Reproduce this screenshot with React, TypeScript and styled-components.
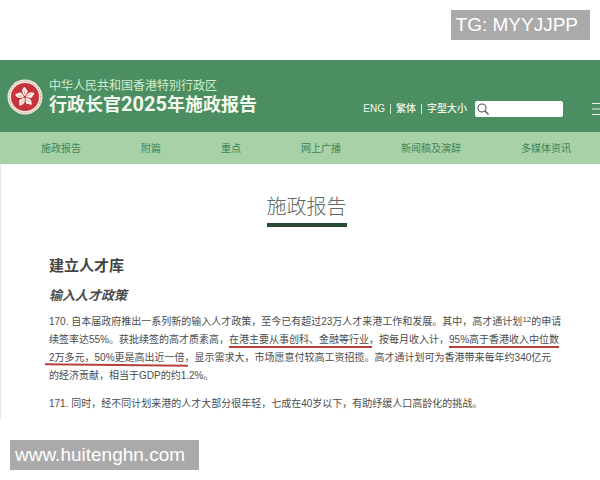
import React from "react";
import styled, { createGlobalStyle } from "styled-components";

const GlobalStyle = createGlobalStyle`
  * { box-sizing: border-box; }
  body {
    margin: 0;
    background: #fff;
    color: #4c4c4c;
    font-family: "Liberation Sans", "Noto Sans CJK SC", sans-serif;
    font-size: 10px;
    overflow-x: hidden;
  }
  h1, h2, h3, p { margin: 0; padding: 0; }
`;

const Page = styled.div`
  position: relative;
  min-height: 100vh;
  padding-top: 60px;
`;

const Header = styled.header`
  display: flex;
  align-items: center;
  height: 72px;
  padding-left: 7px;
  background: #4a8e61;
  color: #f3faee;
`;

const Brand = styled.a`
  display: flex;
  align-items: center;
  gap: 6px;
  padding-top: 1px;
  color: inherit;
  text-decoration: none;
`;

const Emblem = styled.svg`
  width: 36px;
  height: 36px;
  flex: none;
`;

const BrandText = styled.div`
  display: flex;
  flex-direction: column;
  white-space: nowrap;
`;

const Region = styled.span`
  font-size: 12px;
  line-height: 16px;
  color: #d3ecd0;
`;

const SiteTitle = styled.strong`
  font-family: Roboto, "Noto Sans CJK SC", sans-serif;
  font-size: 18px;
  line-height: 22px;
  font-weight: 700;
`;

const Year = styled.span`
  font-size: 20px;
  line-height: 20px;
`;

const Tools = styled.div`
  display: flex;
  align-items: center;
  height: 18px;
  margin-left: auto;
  margin-top: 26px;
`;

const ToolLink = styled.a`
  padding: 0 5px 0 6px;
  color: inherit;
  font-weight: 500;
  line-height: 16px;
  text-decoration: none;
  white-space: nowrap;

  & + & {
    background: linear-gradient(#cfe6cf, #cfe6cf) left center / 1px 10px no-repeat;
  }
`;

const SearchBox = styled.label`
  display: flex;
  align-items: center;
  width: 88px;
  height: 16px;
  margin-left: 3px;
  padding-left: 2px;
  border-radius: 2px;
  background: #fff;
`;

const SearchIcon = styled.svg`
  width: 12px;
  height: 12px;
  flex: none;
`;

const SearchInput = styled.input`
  width: 100%;
  min-width: 0;
  padding: 0 4px;
  border: 0;
  outline: 0;
  background: transparent;
  font: inherit;
`;

const MenuButton = styled.button`
  width: 8px;
  height: 14px;
  margin-left: 29px;
  padding: 0;
  border: 0;
  background: transparent;
  color: #e3f2e1;
`;

const MenuIcon = styled.svg`
  display: block;
  width: 8px;
  height: 14px;
`;

const Nav = styled.nav`
  display: flex;
  align-items: center;
  gap: 60px;
  height: 32px;
  padding-top: 2px;
  padding-left: 41px;
  background: #a8d1a7;
`;

const NavLink = styled.a`
  color: #3f8455;
  line-height: 16px;
  text-decoration: none;
  white-space: nowrap;
`;

const Article = styled.main`
  display: flex;
  flex-direction: column;
  min-height: 256px;
  padding: 28px 36px 0 48px;
  border-left: 1px solid #e6e6e6;
`;

const PageTitle = styled.h1`
  align-self: center;
  border-bottom: 4px solid #2b4b33;
  color: #636963;
  font-size: 20px;
  font-weight: 300;
  line-height: 31px;
`;

const Heading = styled.h2`
  margin-top: 28px;
  color: #444;
  font-size: 15px;
  font-weight: 700;
  line-height: 22px;
`;

const SubHeading = styled.h3`
  margin-top: 10px;
  color: #4c4c4c;
  font-size: 13px;
  font-style: italic;
  font-weight: 700;
  line-height: 18px;
`;

const Paragraph = styled.p`
  margin-top: 8px;
  line-height: 18px;
  white-space: nowrap;

  & + & {
    margin-top: 10px;
  }
`;

const NoteRef = styled.sup`
  font-size: 8px;
  line-height: 0;
  vertical-align: 3px;
`;

const Mark = styled.span<{ $lead?: number; $trail?: number; $tilt?: number }>`
  position: relative;

  &::after {
    content: "";
    position: absolute;
    left: ${(p) => -(p.$lead ?? 0)}px;
    right: ${(p) => -(p.$trail ?? 0)}px;
    bottom: -3px;
    height: 2px;
    background: #b5403c;
    transform: rotate(${(p) => p.$tilt ?? 0}deg);
  }
`;

const Tag = styled.div<{ $corner: "top" | "bottom" }>`
  position: absolute;
  ${(p) =>
    p.$corner === "top"
      ? "top: 10px; right: 10px; padding: 0 12px 0 5px;"
      : "bottom: 10px; left: 10px; padding: 0 14px 0 5px;"}
  background: #aaa;
  color: #fff;
  font-size: 19px;
  line-height: 30px;
`;

const petal =
  "M0 -1 C-3 -3 -4 -7 -1 -10 C0 -10 1 -9 1 -8 C3 -7 3 -5 2 -4 C1 -3 1 -2 0 -1Z";

const navItems = ["施政报告", "附篇", "重点", "网上广播", "新闻稿及演辞", "多媒体资讯"];

export default function App() {
  return (
    <>
      <GlobalStyle />
      <Page>
        <Header>
          <Brand href="#">
            <Emblem viewBox="0 0 36 36" aria-hidden="true">
              <circle cx="18" cy="18" r="17.5" fill="#f2e9df" />
              <circle cx="18" cy="18" r="15.9" fill="none" stroke="#cfa597" strokeWidth="1.2" strokeDasharray="1.3 1.5" />
              <circle cx="18" cy="18" r="14" fill="#c5343a" />
              {[0, 72, 144, 216, 288].map((angle) => (
                <g key={angle} transform={`translate(18 18) rotate(${angle})`}>
                  <path d={petal} fill="#fdf1ea" />
                  <path d="M0 -3 Q-1 -5 -1 -7" fill="none" stroke="#c5343a" strokeWidth="0.4" />
                </g>
              ))}
            </Emblem>
            <BrandText>
              <Region>中华人民共和国香港特别行政区</Region>
              <SiteTitle>行政长官<Year>2025</Year>年施政报告</SiteTitle>
            </BrandText>
          </Brand>
          <Tools>
            <ToolLink href="#">ENG</ToolLink>
            <ToolLink href="#">繁体</ToolLink>
            <ToolLink href="#">字型大小</ToolLink>
            <SearchBox>
              <SearchIcon viewBox="0 0 12 12" aria-hidden="true">
                <circle cx="5" cy="5" r="4" fill="none" stroke="#555" strokeWidth="1.1" />
                <path d="M8 8 L11.5 11.5" stroke="#555" strokeWidth="1.4" />
              </SearchIcon>
              <SearchInput type="text" aria-label="搜寻" />
            </SearchBox>
            <MenuButton type="button" aria-label="选单">
              <MenuIcon viewBox="0 0 8 14">
                <path d="M0 1.5H8M0 7H8M0 12.5H8" stroke="currentColor" strokeWidth="1.2" />
              </MenuIcon>
            </MenuButton>
          </Tools>
        </Header>
        <Nav>
          {navItems.map((item) => (
            <NavLink href="#" key={item}>{item}</NavLink>
          ))}
        </Nav>
        <Article>
          <PageTitle>施政报告</PageTitle>
          <Heading>建立人才库</Heading>
          <SubHeading>输入人才政策</SubHeading>
          <Paragraph>
            170. 自本届政府推出一系列新的输入人才政策，至今已有超过23万人才来港工作和发展。其中，高才通计划<NoteRef>12</NoteRef>的申请
            <br />
            续签率达55%。获批续签的高才质素高，<Mark $trail={3}>在港主要从事创科、金融等行业</Mark>，按每月收入计，<Mark>95%高于香港收入中位数</Mark>
            <br />
            <Mark $lead={4} $trail={3} $tilt={0.6}>2万多元，50%更是高出近一倍</Mark>，显示需求大，市场愿意付较高工资招揽。高才通计划可为香港带来每年约340亿元
            <br />
            的经济贡献，相当于GDP的约1.2%。
          </Paragraph>
          <Paragraph>171. 同时，经不同计划来港的人才大部分很年轻，七成在40岁以下，有助纾缓人口高龄化的挑战。</Paragraph>
        </Article>
        <Tag $corner="top">TG: MYYJJPP</Tag>
        <Tag $corner="bottom">www.huitenghn.com</Tag>
      </Page>
    </>
  );
}
